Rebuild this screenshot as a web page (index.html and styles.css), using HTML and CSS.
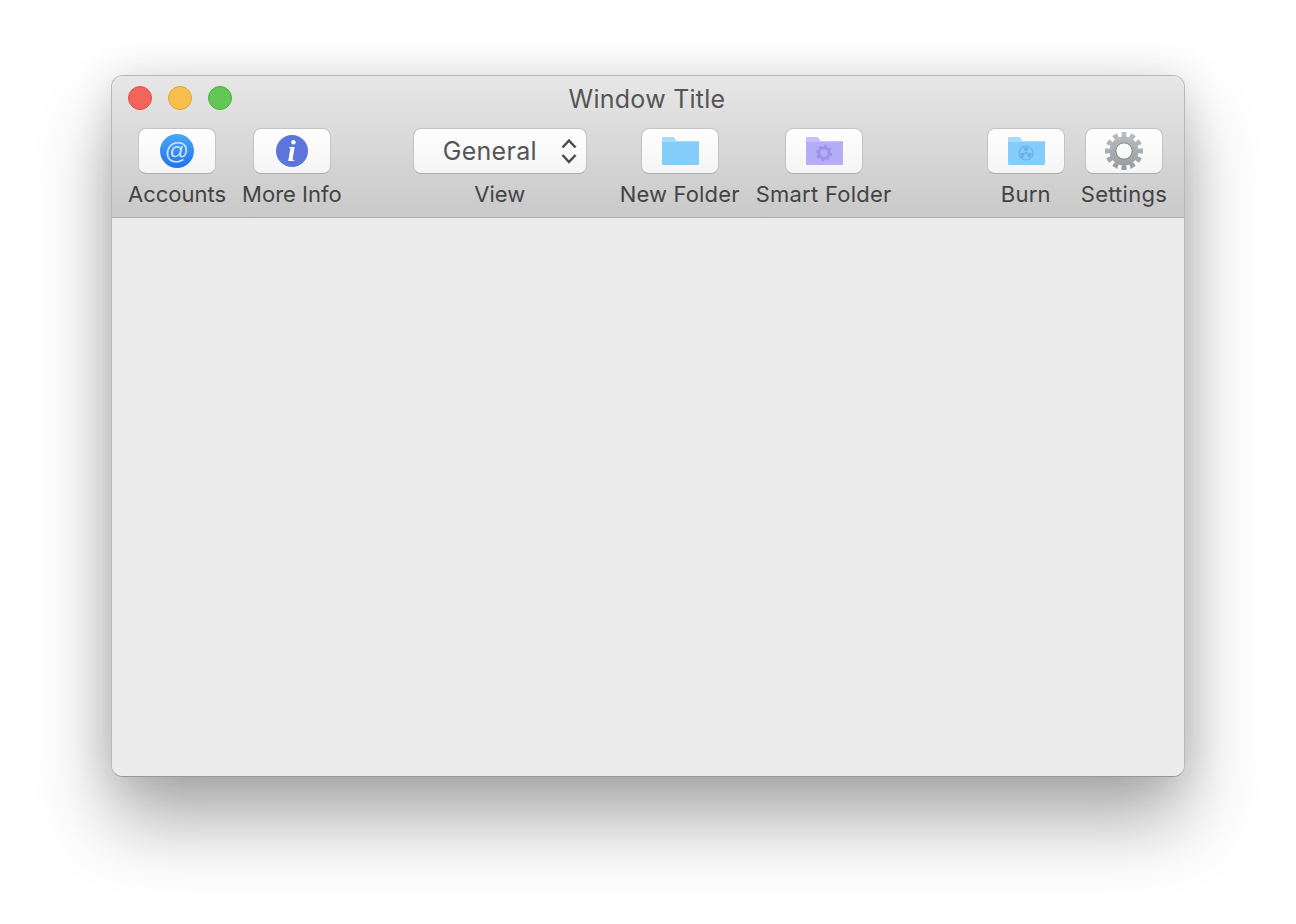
FILE: index.html
```html
<!DOCTYPE html>
<html lang="en">
<head>
<meta charset="utf-8">
<title>Window Title</title>
<link rel="stylesheet" href="styles.css">
</head>
<body>
<main class="window">
  <header class="chrome">
    <div class="titlebar">
      <div class="lights">
        <span class="light light-close"></span>
        <span class="light light-min"></span>
        <span class="light light-max"></span>
      </div>
      <h1 class="title">Window Title</h1>
    </div>
    <div class="toolbar">
      <div class="item">
        <button class="btn"><svg class="icon" width="36" height="36" viewBox="0 0 36 36">
          <defs><linearGradient id="blue" x1="0" y1="0" x2="0" y2="1"><stop offset="0" stop-color="#48a8f3"/><stop offset="1" stop-color="#2273f0"/></linearGradient></defs>
          <circle cx="18" cy="18" r="17" fill="url(#blue)"/>
          <text x="18" y="25.5" class="at">@</text>
        </svg></button>
        <span class="label">Accounts</span>
      </div>
      <div class="item">
        <button class="btn"><svg class="icon" width="36" height="36" viewBox="0 0 36 36">
          <circle cx="18" cy="18" r="16" fill="#5d74da"/>
          <text x="17.6" y="28" class="info">i</text>
        </svg></button>
        <span class="label">More Info</span>
      </div>
      <div class="space-view"></div>
      <div class="item item-view">
        <button class="select"><span class="select-text">General</span>
          <svg class="chev" width="16" height="26" viewBox="0 0 16 26"><path d="M1.5 9.5 8 2.5l6.5 7M1.5 17 8 24l6.5-7" fill="none" stroke="#4b4b4b" stroke-width="2.5"/></svg>
        </button>
        <span class="label">View</span>
      </div>
      <div class="space-folder"></div>
      <div class="item">
        <button class="btn"><svg class="icon" width="38" height="30" viewBox="0 0 38 30">
          <path d="M1 3q0-2 2-2h8q2 0 3 2l1 2h22q1 0 1 1v22q0 1-1 1H2q-1 0-1-1z" fill="#85cdf9"/>
          <path d="M1 3q0-2 2-2h8q2 0 3 2l1 2h23v1H1z" fill="#a6dbfb"/>
        </svg></button>
        <span class="label label-new">New Folder</span>
      </div>
      <div class="item">
        <button class="btn"><svg class="icon" width="38" height="30" viewBox="0 0 38 30">
          <path d="M1 3q0-2 2-2h8q2 0 3 2l1 2h22q1 0 1 1v22q0 1-1 1H2q-1 0-1-1z" fill="#b5adf6"/>
          <path d="M1 3q0-2 2-2h8q2 0 3 2l1 2h23v1H1z" fill="#c6c0f8"/>
          <circle cx="19" cy="17" r="5.2" fill="none" stroke="#9d93e8" stroke-width="3"/>
          <circle cx="19" cy="17" r="7.2" fill="none" stroke="#9d93e8" stroke-width="2" pathLength="16" stroke-dasharray="1 1"/>
        </svg></button>
        <span class="label label-wide">Smart Folder</span>
      </div>
      <div class="space-flex"></div>
      <div class="item">
        <button class="btn"><svg class="icon" width="38" height="30" viewBox="0 0 38 30">
          <path d="M1 3q0-2 2-2h8q2 0 3 2l1 2h22q1 0 1 1v22q0 1-1 1H2q-1 0-1-1z" fill="#85cdf9"/>
          <path d="M1 3q0-2 2-2h8q2 0 3 2l1 2h23v1H1z" fill="#a6dbfb"/>
          <circle cx="19" cy="17" r="7" fill="none" stroke="#62b2ea" stroke-width="1.2"/>
          <circle cx="19" cy="17" r="1.6" fill="#62b2ea"/>
          <circle cx="19" cy="17" r="4" fill="none" stroke="#62b2ea" stroke-width="3.4" pathLength="6" stroke-dasharray="1 1"/>
        </svg></button>
        <span class="label label-wide">Burn</span>
      </div>
      <div class="item">
        <button class="btn"><svg class="icon" width="40" height="40" viewBox="0 0 40 40">
          <defs><linearGradient id="steel" gradientUnits="userSpaceOnUse" x1="0" y1="0" x2="0" y2="40"><stop offset="0" stop-color="#bcc0c3"/><stop offset="1" stop-color="#95989c"/></linearGradient></defs>
          <circle cx="20" cy="20" r="16.5" fill="none" stroke="url(#steel)" stroke-width="5" pathLength="24" stroke-dasharray="1.15 .85" stroke-dashoffset="0.575"/>
          <circle cx="20" cy="20" r="11.25" fill="none" stroke="url(#steel)" stroke-width="6.5"/>
          <circle cx="20" cy="20" r="8.2" fill="none" stroke="#85888b" stroke-width="1"/>
        </svg></button>
        <span class="label label-wide">Settings</span>
      </div>
    </div>
  </header>
  <section class="content"></section>
</main>
</body>
</html>
```
FILE: styles.css
```css
* { box-sizing: border-box; }
html, body { margin: 0; height: 100%; background: #fff; }
body {
  padding: 75px 111px 0;
  overflow: hidden;
  font-family: Inter, "Liberation Sans", sans-serif;
}
.window {
  display: flex;
  flex-direction: column;
  height: 702px;
  border: 1px solid #b8b8b8;
  border-bottom-color: #989898;
  border-radius: 12px;
  overflow: hidden;
  background: #ececec;
  box-shadow: 0 44px 76px rgba(0, 0, 0, .33), 0 0 40px rgba(0, 0, 0, .11);
}
.chrome {
  background: linear-gradient(#e7e7e7, #c9c9c9);
  border-bottom: 1px solid #adadad;
  height: 142px;
}
.titlebar {
  display: grid;
  grid-template-columns: 1fr auto 1fr;
  align-items: center;
  height: 44px;
  padding: 0 16px;
}
.lights { display: flex; gap: 16px; }
.light { width: 24px; height: 24px; border-radius: 50%; border: 1px solid; }
.light-close { background: #f2655c; border-color: #dd5048; }
.light-min { background: #f9bf4d; border-color: #e1a238; }
.light-max { background: #62c854; border-color: #4eae42; }
.title {
  grid-column: 2;
  margin: 0;
  padding: 2px 2px 0 0;
  font-size: 25px;
  font-weight: 400;
  letter-spacing: .25px;
  color: #555;
  white-space: nowrap;
}
.toolbar {
  display: flex;
  gap: 16px;
  padding: 8px 17px 0 16px;
}
.item {
  display: flex;
  flex-direction: column;
  align-items: center;
  gap: 6px;
}
.btn, .select {
  display: flex;
  align-items: center;
  height: 46px;
  padding: 0;
  border: 1px solid #c3c3c3;
  border-bottom-color: #adadad;
  border-radius: 8px;
  background: linear-gradient(#fefefe, #f5f5f5);
}
.btn { width: 78px; justify-content: center; }
.select {
  width: 174px;
  padding: 0 9px 0 29px;
  justify-content: space-between;
  font: inherit;
  font-size: 25px;
  letter-spacing: .3px;
  color: #555;
}
.icon { display: block; filter: blur(.5px); }
.at {
  font-family: "Liberation Sans", sans-serif;
  font-size: 24px;
  fill: #cfe4fb;
  text-anchor: middle;
}
.info {
  font-family: "Liberation Serif", serif;
  font-size: 30px;
  font-weight: 700;
  font-style: italic;
  fill: #fff;
  text-anchor: middle;
}
.label {
  font-size: 22px;
  line-height: 28px;
  color: #444;
  white-space: nowrap;
}
.label-new { letter-spacing: .15px; }
.label-wide { letter-spacing: .25px; }
.space-view { width: 39px; }
.space-folder { width: 1px; }
.space-flex { flex: 1; }
.content { flex: 1; background: #ececec; }
```
